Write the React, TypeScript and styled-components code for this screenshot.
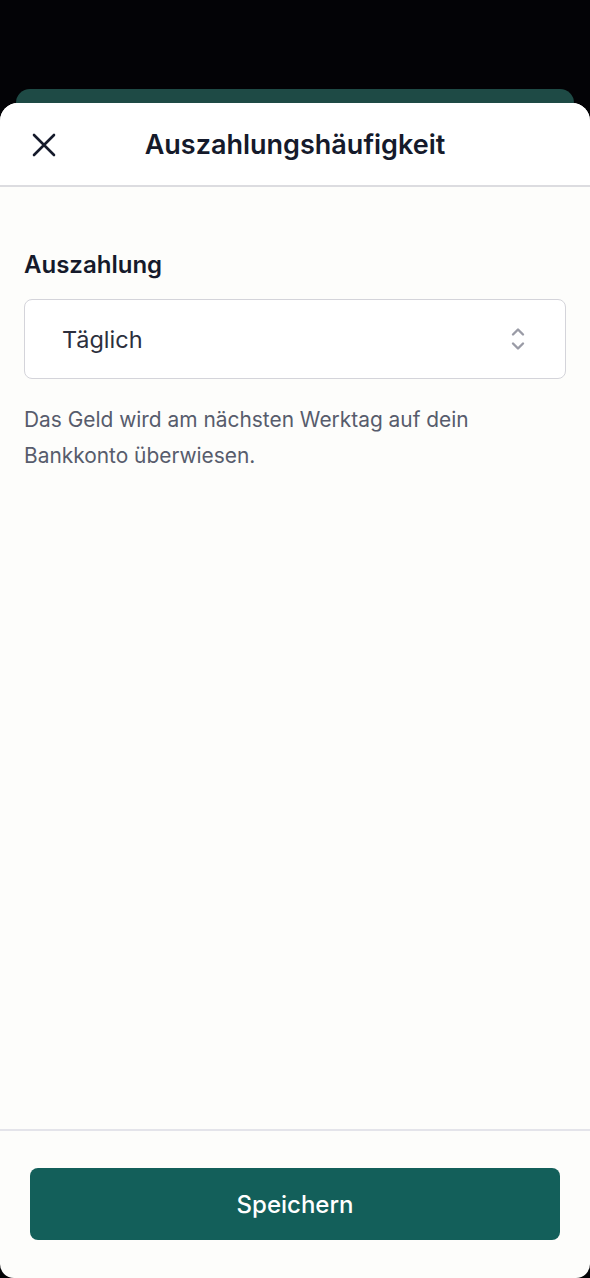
import React from 'react';
import styled, { createGlobalStyle } from 'styled-components';

const GlobalStyle = createGlobalStyle`
  html, body {
    margin: 0;
    padding: 0;
    background: #030306;
  }
  body {
    font-family: Inter, "Noto Sans", "Liberation Sans", sans-serif;
    -webkit-font-smoothing: antialiased;
  }
`;

const App: React.FC = () => {
  return (
    <>
      <GlobalStyle />
      <Screen>
        <BackCard />
        <Sheet>
          <Header>
            <CloseButton aria-label="Schließen">
              <svg width="24" height="24" viewBox="0 0 24 24" fill="none">
                <path d="M2 2L22 22M22 2L2 22" stroke="#151a2b" strokeWidth="2.6" strokeLinecap="round" />
              </svg>
            </CloseButton>
            <Title>Auszahlungshäufigkeit</Title>
          </Header>

          <Body>
            <Label>Auszahlung</Label>
            <Select>
              <SelectValue>Täglich</SelectValue>
              <svg width="14" height="24" viewBox="0 0 14 24" fill="none">
                <path d="M2 7.5L7 2.5L12 7.5" stroke="#9a9ba6" strokeWidth="2.4" strokeLinecap="round" strokeLinejoin="round" />
                <path d="M2 16.5L7 21.5L12 16.5" stroke="#9a9ba6" strokeWidth="2.4" strokeLinecap="round" strokeLinejoin="round" />
              </svg>
            </Select>
            <Hint>
              Das Geld wird am nächsten Werktag auf dein
              <br />
              Bankkonto überwiesen.
            </Hint>
          </Body>

          <Footer>
            <SaveButton>Speichern</SaveButton>
          </Footer>
        </Sheet>
      </Screen>
    </>
  );
};

const Screen = styled.div`
  height: 1278px;
  display: flex;
  flex-direction: column;
  padding-top: 89px;
  box-sizing: border-box;
  overflow: hidden;
`;

const BackCard = styled.div`
  height: 14px;
  margin: 0 16px;
  background: #1e4a45;
  border-radius: 14px 14px 0 0;
  flex-shrink: 0;
`;

const Sheet = styled.div`
  flex: 1;
  display: flex;
  flex-direction: column;
  background: #fdfdfb;
  border-radius: 18px 18px 14px 14px;
  overflow: hidden;
`;

const Header = styled.div`
  height: 82px;
  flex-shrink: 0;
  display: flex;
  align-items: center;
  justify-content: center;
  position: relative;
  background: #ffffff;
  border-bottom: 2px solid #dcdce0;
`;

const CloseButton = styled.button`
  position: absolute;
  left: 32px;
  top: 30px;
  width: 24px;
  height: 24px;
  padding: 0;
  border: none;
  background: transparent;
  display: flex;
`;

const Title = styled.h1`
  margin: 0;
  font-size: 27px;
  font-weight: 600;
  color: #151a2b;
`;

const Body = styled.div`
  flex: 1;
  padding: 64px 24px 0;
  display: flex;
  flex-direction: column;
`;

const Label = styled.div`
  font-size: 24px;
  font-weight: 600;
  color: #151a2b;
  line-height: 28px;
  margin-bottom: 20px;
`;

const Select = styled.div`
  height: 80px;
  box-sizing: border-box;
  border: 1.5px solid #d4d4da;
  border-radius: 8px;
  background: #ffffff;
  display: flex;
  align-items: center;
  justify-content: space-between;
  padding: 0 40px 0 37px;
`;

const SelectValue = styled.span`
  font-size: 23.5px;
  color: #2c2f3d;
`;

const Hint = styled.p`
  margin: 23px 0 0;
  font-size: 20.9px;
  line-height: 36px;
  color: #575c6c;
`;

const Footer = styled.div`
  flex-shrink: 0;
  height: 149px;
  box-sizing: border-box;
  border-top: 2px solid #e4e4ea;
  padding: 37px 30px 0;
`;

const SaveButton = styled.button`
  width: 100%;
  height: 72px;
  border: none;
  border-radius: 8px;
  background: #135f5a;
  color: #ffffff;
  font-family: inherit;
  font-size: 24px;
  font-weight: 500;
`;

export default App;
